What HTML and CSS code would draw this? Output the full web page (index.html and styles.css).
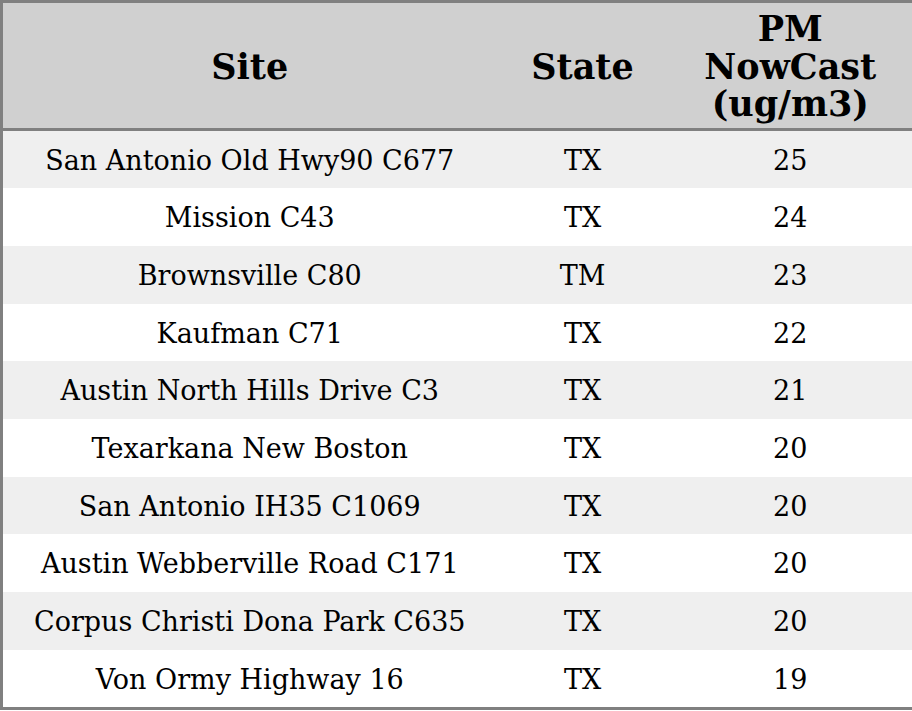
FILE: index.html
```html
<!DOCTYPE html>
<html>
<head>
<meta charset="utf-8">
<link rel="stylesheet" href="styles.css">
</head>
<body>
<table class="aq">
  <colgroup>
    <col class="c-site">
    <col class="c-state">
    <col class="c-pm">
  </colgroup>
  <thead>
    <tr><th>Site</th><th>State</th><th>PM<br>NowCast<br>(ug/m3)</th></tr>
  </thead>
  <tbody>
    <tr><td>San Antonio Old Hwy90 C677</td><td>TX</td><td>25</td></tr>
    <tr><td>Mission C43</td><td>TX</td><td>24</td></tr>
    <tr><td>Brownsville C80</td><td>TM</td><td>23</td></tr>
    <tr><td>Kaufman C71</td><td>TX</td><td>22</td></tr>
    <tr><td>Austin North Hills Drive C3</td><td>TX</td><td>21</td></tr>
    <tr><td>Texarkana New Boston</td><td>TX</td><td>20</td></tr>
    <tr><td>San Antonio IH35 C1069</td><td>TX</td><td>20</td></tr>
    <tr><td>Austin Webberville Road C171</td><td>TX</td><td>20</td></tr>
    <tr><td>Corpus Christi Dona Park C635</td><td>TX</td><td>20</td></tr>
    <tr><td>Von Ormy Highway 16</td><td>TX</td><td>19</td></tr>
  </tbody>
</table>
</body>
</html>
```
FILE: styles.css
```css
html, body {
  margin: 0;
  padding: 0;
  background: #ffffff;
}
.aq {
  width: 912px;
  border-collapse: collapse;
  border: 3px solid #808080;
  font-family: "DejaVu Serif", serif;
  color: #000;
  table-layout: fixed;
}
.c-site { width: 495px; }
.c-state { width: 172px; }
.c-pm { width: 245px; }
.aq th {
  background: #d0d0d0;
  font-size: 35px;
  font-weight: bold;
  line-height: 37.5px;
  padding: 7px 0 5px;
  text-align: center;
  border-bottom: 3px solid #808080;
}
.aq td {
  font-size: 27px;
  line-height: 31px;
  padding: 14px 0 12.7px;
  text-align: center;
}
.aq tbody tr:nth-child(odd) td {
  background: #efefef;
}
```
